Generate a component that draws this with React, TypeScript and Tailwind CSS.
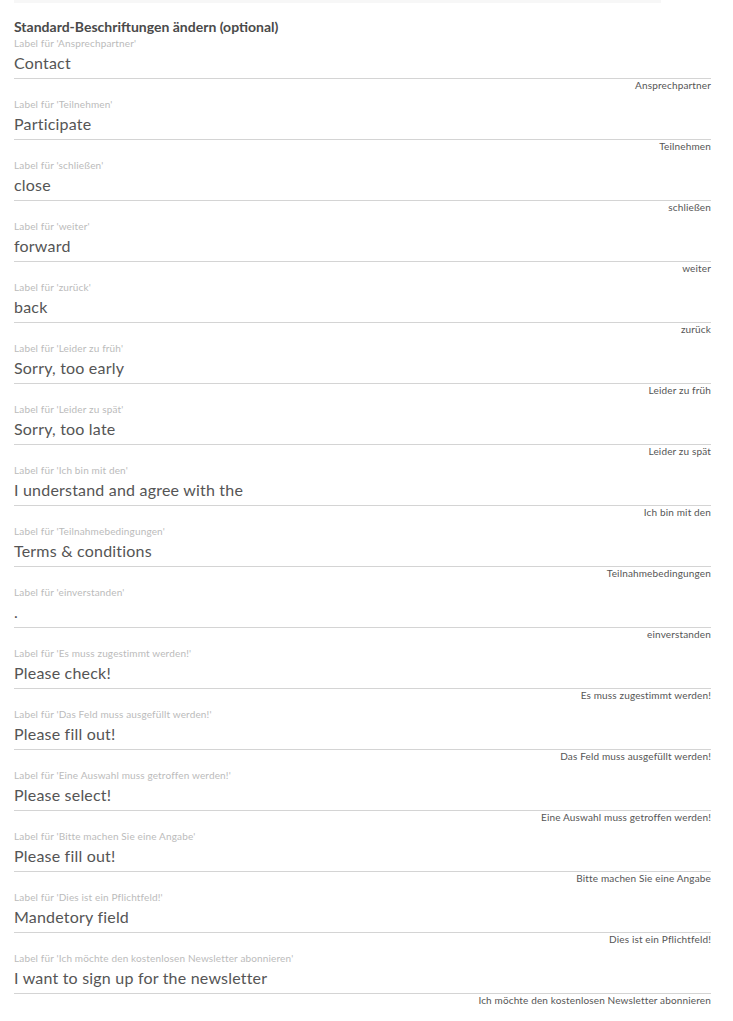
import React from "react";

const rows: [string, string][] = [
  ["Ansprechpartner", "Contact"],
  ["Teilnehmen", "Participate"],
  ["schließen", "close"],
  ["weiter", "forward"],
  ["zurück", "back"],
  ["Leider zu früh", "Sorry, too early"],
  ["Leider zu spät", "Sorry, too late"],
  ["Ich bin mit den", "I understand and agree with the"],
  ["Teilnahmebedingungen", "Terms & conditions"],
  ["einverstanden", "."],
  ["Es muss zugestimmt werden!", "Please check!"],
  ["Das Feld muss ausgefüllt werden!", "Please fill out!"],
  ["Eine Auswahl muss getroffen werden!", "Please select!"],
  ["Bitte machen Sie eine Angabe", "Please fill out!"],
  ["Dies ist ein Pflichtfeld!", "Mandetory field"],
  ["Ich möchte den kostenlosen Newsletter abonnieren", "I want to sign up for the newsletter"],
];

export default function App() {
  return (
    <div className="w-[733px] min-h-[1021px] bg-white font-['Lato','Noto_Sans',sans-serif]">
      <div className="ml-[14px] w-[647px] h-[3px] bg-[#f7f7f7]" />
      <div className="pl-[14px] pr-[22px]">
        <h2 className="mt-[14px] text-[14px] leading-[20px] font-bold text-[#4a4a4a]">
          Standard-Beschriftungen ändern (optional)
        </h2>
        {rows.map(([de, en], i) => (
          <div key={i} className="mb-[7px]">
            <div className="text-[10px] leading-[12px] tracking-[0.15px] text-[#bbbbbb]">
              Label für '{de}'
            </div>
            <div className="h-[30px] pt-[2px] border-b border-[#d4d4d4] text-[16px] leading-[24px] tracking-[0.2px] text-[#555555]">
              {en}
            </div>
            <div className="text-right text-[10px] leading-[12px] tracking-[0.15px] text-[#555555]">
              {de}
            </div>
          </div>
        ))}
      </div>
    </div>
  );
}
